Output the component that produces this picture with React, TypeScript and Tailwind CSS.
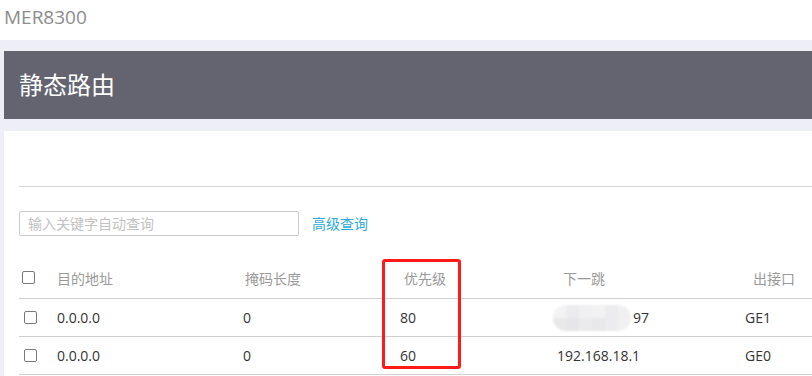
import React from 'react';

const font = { fontFamily: '"Open Sans", "Noto Sans CJK SC", sans-serif' };

interface Route {
  dest: string;
  mask: string;
  priority: string;
  nextHop: string | null;
  iface: string;
}

const routes: Route[] = [
  { dest: '0.0.0.0', mask: '0', priority: '80', nextHop: null, iface: 'GE1' },
  { dest: '0.0.0.0', mask: '0', priority: '60', nextHop: '192.168.18.1', iface: 'GE0' },
];

const Checkbox: React.FC<{ className?: string }> = ({ className = '' }) => (
  <span className={`block w-[13px] h-[13px] border border-[#7a7a7a] rounded-[2px] bg-white ${className}`} />
);

// Pixelated blur over the masked next hop address
const MaskedAddress: React.FC = () => (
  <span className="flex items-center -ml-[4px]">
    <span className="w-[78px] h-[26px] rounded-full overflow-hidden blur-[1px] grid grid-cols-6 grid-rows-2">
      <span className="bg-[#f3f3f3]" />
      <span className="bg-[#ececee]" />
      <span className="bg-[#f0f0f2]" />
      <span className="bg-[#f2f2f2]" />
      <span className="bg-[#ececee]" />
      <span className="bg-[#f0f0f0]" />
      <span className="bg-[#e9e9e9]" />
      <span className="bg-[#e6e6e8]" />
      <span className="bg-[#ebebed]" />
      <span className="bg-[#e8e8ea]" />
      <span className="bg-[#ececee]" />
      <span className="bg-[#f1f1f1]" />
    </span>
    <span className="ml-[2px]">97</span>
  </span>
);

const cols = 'grid grid-cols-[38px_186px_157px_157px_188px_1fr]';

export default function App() {
  return (
    <div className="w-[812px] h-[376px] overflow-hidden bg-[#eeeef7]" style={font}>
      <div className="h-[40px] bg-white pl-[4px] pt-[3px]">
        <span className="text-[19px] text-[#8c8c8c]">MER8300</span>
      </div>

      <div className="pl-[4px] pt-[11px]">
        <div className="h-[68px] bg-[#636470] flex items-center pl-[15px]">
          <h1 className="text-[24px] text-white">静态路由</h1>
        </div>

        <div className="mt-[12px] bg-white pl-[15px] h-[260px]">
          <div className="h-[56px] border-b border-[#d6d6d6]" />

          <div className="mt-[24px] flex items-center">
            <input
              className="w-[280px] h-[25px] border border-[#cccccc] rounded-[2px] px-[8px] text-[14px] outline-none placeholder:text-[#c2c2c2]"
              placeholder="输入关键字自动查询"
              style={font}
            />
            <a className="ml-[13px] text-[14px] text-[#2fa8d8]">高级查询</a>
          </div>

          <div className="relative mt-[23px]">
            <div className={`${cols} h-[40px] items-center border-b border-[#d0d0d0] text-[14px] text-[#9a9a9a]`}>
              <div className="pl-[3px] -mt-[2px]"><Checkbox /></div>
              <div>目的地址</div>
              <div className="pl-[2px]">掩码长度</div>
              <div className="pl-[4px]">优先级</div>
              <div className="pl-[6px]">下一跳</div>
              <div className="pl-[8px]">出接口</div>
            </div>

            {routes.map((r, i) => (
              <div key={i} className={`${cols} h-[38px] items-center border-b border-[#d0d0d0] text-[14px] text-[#333333]`}>
                <div className="pl-[5px]"><Checkbox /></div>
                <div>{r.dest}</div>
                <div>{r.mask}</div>
                <div>{r.priority}</div>
                <div>{r.nextHop ?? <MaskedAddress />}</div>
                <div>{r.iface}</div>
              </div>
            ))}

            {/* red highlight around the priority column */}
            <div className="absolute left-[363px] top-0 w-[79px] h-[110px] border-[3px] border-[#ff1a1a] rounded-[3px] pointer-events-none" />
          </div>
        </div>
      </div>
    </div>
  );
}
